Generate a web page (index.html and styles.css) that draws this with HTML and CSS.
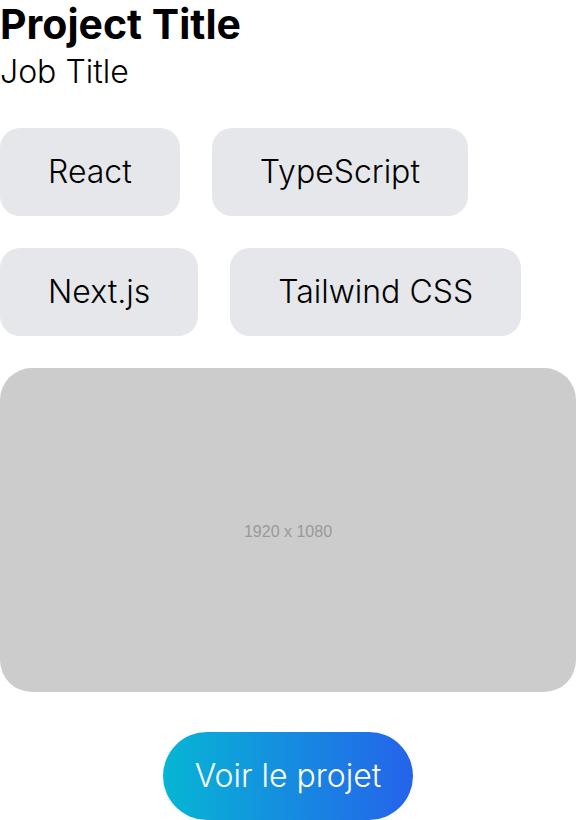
FILE: index.html
```html
<!DOCTYPE html>
<html>
<head>
<meta charset="utf-8">
<link rel="stylesheet" href="styles.css">
</head>
<body>
<div class="card">
  <h1 class="title">Project Title</h1>
  <p class="job">Job Title</p>
  <div class="tags">
    <span class="tag">React</span>
    <span class="tag">TypeScript</span>
    <span class="tag">Next.js</span>
    <span class="tag">Tailwind CSS</span>
  </div>
  <div class="media"><span class="media-label">1920 x 1080</span></div>
  <div class="actions"><a class="cta">Voir le projet</a></div>
</div>
</body>
</html>
```
FILE: styles.css
```css
html, body { margin: 0; padding: 0; background: #fff; }
body { font-family: Inter, "Noto Sans", sans-serif; color: #000; }
.card { display: flex; flex-direction: column; }
.title { margin: 0; font-size: 41px; line-height: 48px; font-weight: 700; }
.job { margin: 0; font-size: 32px; line-height: 48px; font-weight: 300; }
.tags { display: flex; flex-wrap: wrap; gap: 32px; margin-top: 32px; }
.tag { background: #e5e7eb; border-radius: 20px; padding: 24px 48px; font-size: 32px; line-height: 40px; font-weight: 300; }
.media { margin-top: 32px; aspect-ratio: 16 / 9; background: #cccccc; border-radius: 32px; display: flex; align-items: center; justify-content: center; }
.media-label { font-family: "Liberation Sans", Arial, sans-serif; font-size: 16px; color: #999; padding-top: 3px; }
.actions { display: flex; justify-content: center; margin-top: 40px; }
.cta { display: block; padding: 24px 32px; border-radius: 9999px; font-size: 32px; line-height: 40px; font-weight: 300; color: #fff; background: linear-gradient(to right, #06b6d4, #2563eb); }
```
